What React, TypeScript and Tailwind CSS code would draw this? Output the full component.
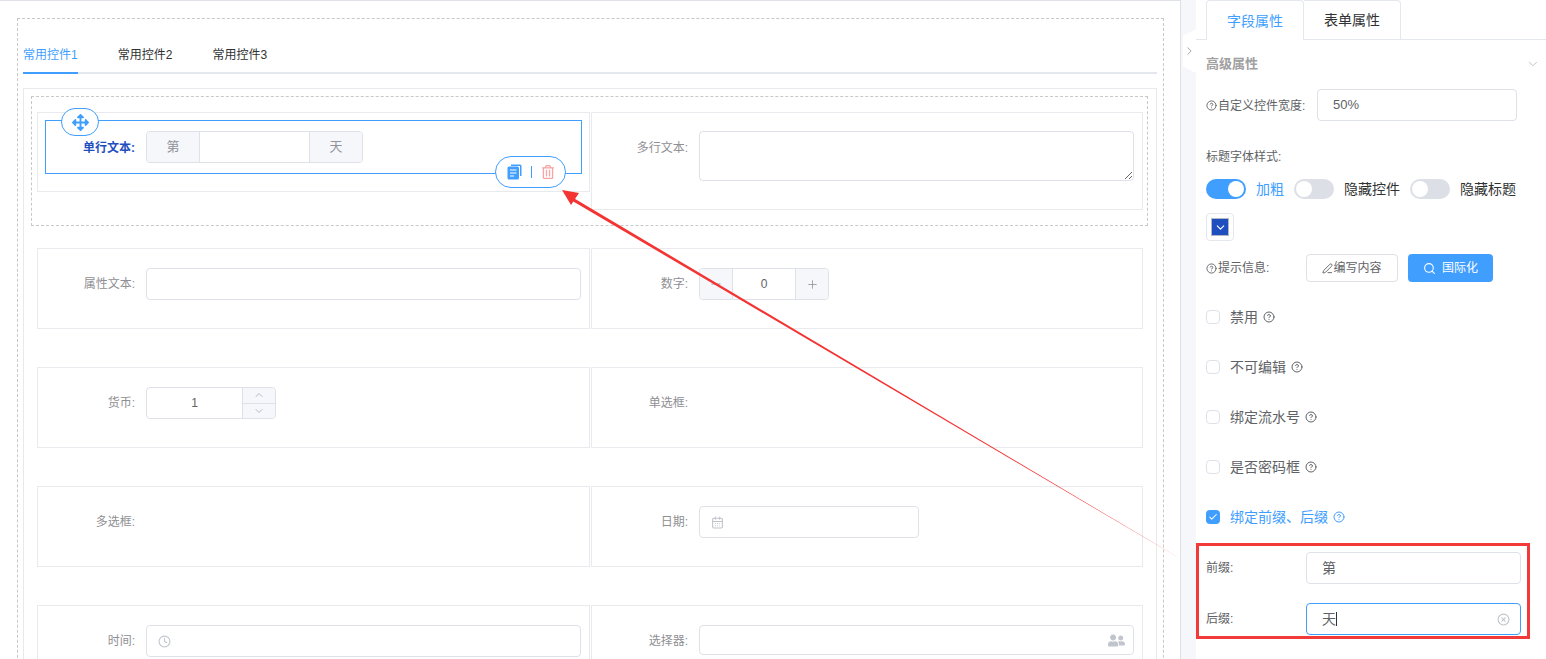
import type { ReactNode } from "react";
import { CalendarDays, Check, ChevronDown, ChevronRight, ChevronUp, CircleHelp, CircleX, Clock, Minus, PenLine, Plus, Search } from "lucide-react";
import { FaArrowsAlt, FaRegTrashAlt, FaUserFriends } from "react-icons/fa";

const inputBox = "h-8 rounded border border-[#dfe1e8] bg-white";

function Cell({ label, children, height = "h-[81px]", right }: { label: string; children?: ReactNode; height?: string; right?: boolean }) {
    return (
        <div className={`flex items-start border border-[#e9eaed] pt-[19px] pr-2 ${right ? "w-[552px]" : "w-[553px]"} ${height}`}>
            <div className={`h-8 flex items-center justify-end shrink-0 mr-[11px] text-xs text-[#8f8f94] ${right ? "w-[96px]" : "w-[97px]"}`}>
                {label}:
            </div>
            {children}
        </div>
    );
}

function Row({ left, right, dashed }: { left: ReactNode; right: ReactNode; dashed?: boolean }) {
    return (
        <div className={`flex items-start w-[1117px] border pl-[5px] py-[15px] mb-[6px] ${dashed ? "border-dashed border-[#c8c8c8]" : "border-transparent"}`}>
            {left}
            <div className="ml-[1px]">{right}</div>
        </div>
    );
}

function Switch({ on }: { on?: boolean }) {
    return (
        <div className={`relative w-10 h-5 rounded-full shrink-0 ${on ? "bg-[#409eff]" : "bg-[#dcdfe6]"}`}>
            <div className={`absolute top-[2px] w-4 h-4 rounded-full bg-white ${on ? "left-[22px]" : "left-[2px]"}`} />
        </div>
    );
}

function CheckRow({ label, checked }: { label: string; checked?: boolean }) {
    return (
        <div className="flex items-center h-5 mb-[30px] text-sm">
            {checked ? (
                <div className="w-[14px] h-[14px] rounded-sm bg-[#409eff] flex items-center justify-center text-white mr-[10px]">
                    <Check size={10} strokeWidth={2.5} />
                </div>
            ) : (
                <div className="w-[14px] h-[14px] rounded-sm border border-[#dfe1e8] bg-white mr-[10px]" />
            )}
            <span className={checked ? "text-[#409eff]" : "text-[#606266]"}>{label}</span>
            <CircleHelp size={12} className={`ml-[5px] ${checked ? "text-[#409eff]" : "text-[#606266]"}`} />
        </div>
    );
}

function CopyIcon() {
    return (
        <svg width="15" height="16" viewBox="0 0 15 16">
            <path d="M4 0.5h9a1.5 1.5 0 0 1 1.5 1.5v10h-1.5V2H4z" fill="#409eff" />
            <rect x="0.5" y="2.5" width="11.5" height="13" rx="1.5" fill="#409eff" />
            <path d="M3 6h6.5M3 9h6.5M3 12h4" stroke="#fff" strokeWidth="1.2" />
        </svg>
    );
}

function Arrow() {
    return (
        <svg className="absolute left-0 top-0 pointer-events-none" width="1546" height="659">
            <polygon points="1183.5,560.6 573.5,198 572.5,201" fill="#f43333" />
            <polygon points="562,190 579,193 571,205" fill="#f43333" />
        </svg>
    );
}

export default function App() {
    return (
        <div className="relative flex w-[1546px] h-[659px] overflow-hidden bg-white font-['Liberation_Sans','Noto_Sans_CJK_SC',sans-serif]">
            {/* form canvas */}
            <div className="w-[1181px] h-full shrink-0 border-r border-t border-[#e0e1e6] pl-[17px] pt-[17px]">
                <div className="w-[1147px] h-[700px] border border-dashed border-[#c8c8c8] pl-[5px] pt-[21px]">
                    <div className="w-[1134px] flex gap-10 border-b-2 border-[#e4e7ed] h-[34px] text-xs text-[#303133]">
                        <div className="h-[34px] border-b-2 border-[#409eff] text-[#409eff] leading-[30px]">常用控件1</div>
                        <div className="leading-[30px]">常用控件2</div>
                        <div className="leading-[30px]">常用控件3</div>
                    </div>
                    <div className="w-[1134px] mt-[14px] h-[600px] border border-[#e8e9ec] pl-[7px] pt-[7px]">
                        <Row
                            dashed
                            left={
                                <div className="w-[553px] h-[80px] border border-[#e9eaed] pl-[7px] pt-[7px]">
                                    <div className="relative flex w-[537px] h-[54px] border border-[#409eff] pt-[10px]">
                                        <div className="absolute -top-[13px] left-[15px] w-[38px] h-[28px] rounded-[14px] border border-[#409eff] bg-white flex items-center justify-center text-[#409eff]">
                                            <FaArrowsAlt size={17} />
                                        </div>
                                        <div className="w-[89px] h-8 pt-px flex items-center justify-end mr-[11px] text-xs font-bold text-[#1f4fbf]">
                                            单行文本:
                                        </div>
                                        <div className="flex w-[217px] h-8 rounded border border-[#dfe1e8] text-[13px] text-[#909399]">
                                            <div className="w-[53px] flex items-center justify-center bg-[#f5f7fa] border-r border-[#dfe1e8] rounded-l">第</div>
                                            <div className="flex-1" />
                                            <div className="w-[53px] flex items-center justify-center bg-[#f5f7fa] border-l border-[#dfe1e8] rounded-r">天</div>
                                        </div>
                                        <div className="absolute top-[35px] left-[449px] w-[71px] h-8 rounded-2xl border border-[#409eff] bg-white flex items-center justify-center">
                                            <CopyIcon />
                                            <div className="w-px h-3 bg-[#409eff] mx-[9px]" />
                                            <FaRegTrashAlt size={14} className="text-[#f9a3a3]" />
                                        </div>
                                    </div>
                                </div>
                            }
                            right={
                                <Cell right label="多行文本" height="h-[98px]">
                                    <textarea readOnly className="w-[435px] h-[50px] -mt-px rounded border border-[#dfe1e8] bg-white block" />
                                </Cell>
                            }
                        />
                        <Row
                            left={
                                <Cell label="属性文本">
                                    <div className={`${inputBox} w-[435px]`} />
                                </Cell>
                            }
                            right={
                                <Cell right label="数字">
                                    <div className="flex w-[130px] h-8 rounded border border-[#dfe1e8] text-xs text-[#606266]">
                                        <div className="w-[33px] flex items-center justify-center bg-[#f5f7fa] border-r border-[#dfe1e8] rounded-l text-[#909399]">
                                            <Minus size={14} strokeWidth={1.5} />
                                        </div>
                                        <div className="flex-1 flex items-center justify-center">0</div>
                                        <div className="w-[33px] flex items-center justify-center bg-[#f5f7fa] border-l border-[#dfe1e8] rounded-r text-[#909399]">
                                            <Plus size={13} strokeWidth={1.5} />
                                        </div>
                                    </div>
                                </Cell>
                            }
                        />
                        <Row
                            left={
                                <Cell label="货币">
                                    <div className="flex w-[130px] h-8 rounded border border-[#dfe1e8] text-xs text-[#606266]">
                                        <div className="flex-1 flex items-center justify-center">1</div>
                                        <div className="w-[33px] flex flex-col bg-[#f5f7fa] border-l border-[#dfe1e8] rounded-r text-[#b4b8c2]">
                                            <div className="flex-1 flex items-center justify-center border-b border-[#dfe1e8]">
                                                <ChevronUp size={12} />
                                            </div>
                                            <div className="flex-1 flex items-center justify-center">
                                                <ChevronDown size={12} />
                                            </div>
                                        </div>
                                    </div>
                                </Cell>
                            }
                            right={<Cell right label="单选框" />}
                        />
                        <Row
                            left={<Cell label="多选框" />}
                            right={
                                <Cell right label="日期">
                                    <div className={`${inputBox} w-[220px] flex items-center pl-[11px] text-[#c0c4cc]`}>
                                        <CalendarDays size={13} />
                                    </div>
                                </Cell>
                            }
                        />
                        <Row
                            left={
                                <Cell label="时间">
                                    <div className={`${inputBox} w-[435px] flex items-center pl-[11px] text-[#c0c4cc]`}>
                                        <Clock size={13} />
                                    </div>
                                </Cell>
                            }
                            right={
                                <Cell right label="选择器">
                                    <div className={`${inputBox} w-[435px] h-[30px] flex items-center justify-end pr-[8px] text-[#c0c4cc]`}>
                                        <FaUserFriends size={17} />
                                    </div>
                                </Cell>
                            }
                        />
                    </div>
                </div>
            </div>

            {/* collapse handle */}
            <div className="w-[15px] h-full shrink-0 bg-[#f5f7fb] pt-[29px] pl-[2px]">
                <div className="w-[13px] h-[44px] bg-white flex items-center justify-center text-[#909399] [clip-path:polygon(100%_0,100%_100%,0_85%,0_15%)]">
                    <ChevronRight size={14} strokeWidth={1.5} />
                </div>
            </div>

            {/* property panel */}
            <div className="flex-1 min-w-0 text-xs text-[#606266]">
                <div className="flex h-10 border-b border-[#e4e7ed] pl-[10px] text-sm">
                    <div className="w-[98px] h-10 flex items-center justify-center bg-white border-x border-t border-[#e4e7ed] rounded-t text-[#409eff]">
                        字段属性
                    </div>
                    <div className="w-[97px] h-[39px] flex items-center justify-center border-r border-t border-[#e4e7ed] rounded-tr text-[#303133]">
                        表单属性
                    </div>
                </div>
                <div className="pl-[10px] pt-[14px]">
                    <div className="flex items-center justify-between h-5 pr-[6px] text-[13px] font-bold text-[#a0a0a0]">
                        高级属性
                        <ChevronDown size={14} strokeWidth={1.5} className="text-[#b4b8c2]" />
                    </div>
                    <div className="flex items-center mt-[15px] h-8">
                        <CircleHelp size={11} className="mr-px" />
                        <span className="w-[99px] pt-px">自定义控件宽度:</span>
                        <div className={`${inputBox} w-[200px] flex items-center pl-[15px] text-[13px]`}>50%</div>
                    </div>
                    <div className="mt-[26px] h-5 leading-5">标题字体样式:</div>
                    <div className="flex items-center mt-[12px] h-5 text-sm">
                        <Switch on />
                        <span className="ml-[10px] w-[38px] text-[#409eff]">加粗</span>
                        <Switch />
                        <span className="ml-[10px] w-[66px] text-[#303133]">隐藏控件</span>
                        <Switch />
                        <span className="ml-[10px] text-[#303133]">隐藏标题</span>
                    </div>
                    <div className="mt-[14px] w-7 h-7 rounded border border-[#e4e7ed] flex items-center justify-center">
                        <div className="w-[18px] h-[18px] bg-[#1f4fbf] border border-[#b4b8c2] flex items-center justify-center text-white">
                            <ChevronDown size={13} />
                        </div>
                    </div>
                    <div className="flex items-center mt-[13px] h-7">
                        <CircleHelp size={11} className="mr-px" />
                        <span className="w-[88px]">提示信息:</span>
                        <div className="w-[92px] h-7 rounded-sm border border-[#dfe1e8] flex items-center justify-center">
                            <PenLine size={11} />
                            编写内容
                        </div>
                        <div className="w-[85px] h-7 ml-[10px] rounded-sm bg-[#409eff] text-white flex items-center justify-center gap-[6px]">
                            <Search size={13} />
                            国际化
                        </div>
                    </div>
                    <div className="mt-[25px]">
                        <CheckRow label="禁用" />
                        <CheckRow label="不可编辑" />
                        <CheckRow label="绑定流水号" />
                        <CheckRow label="是否密码框" />
                        <CheckRow label="绑定前缀、后缀" checked />
                    </div>
                </div>
                {/* highlighted prefix / suffix fields */}
                <div className="w-[334px] h-[96px] -mt-[14px] border-[3px] border-[#f23a3a] pl-[7px] pt-[5px]">
                    <div className="flex items-center h-8 mt-px">
                        <span className="w-[100px]">前缀:</span>
                        <div className={`${inputBox} w-[215px] flex items-center pl-[15px] text-sm`}>第</div>
                    </div>
                    <div className="flex items-center h-8 mt-[19px]">
                        <span className="w-[100px]">后缀:</span>
                        <div className="w-[215px] h-8 rounded border border-[#409eff] flex items-center pl-[15px] pr-[10px] text-sm">
                            天
                            <span className="w-px h-[14px] bg-[#303133]" />
                            <CircleX size={13} className="ml-auto text-[#c0c4cc]" />
                        </div>
                    </div>
                </div>
            </div>

            <Arrow />
        </div>
    );
}
